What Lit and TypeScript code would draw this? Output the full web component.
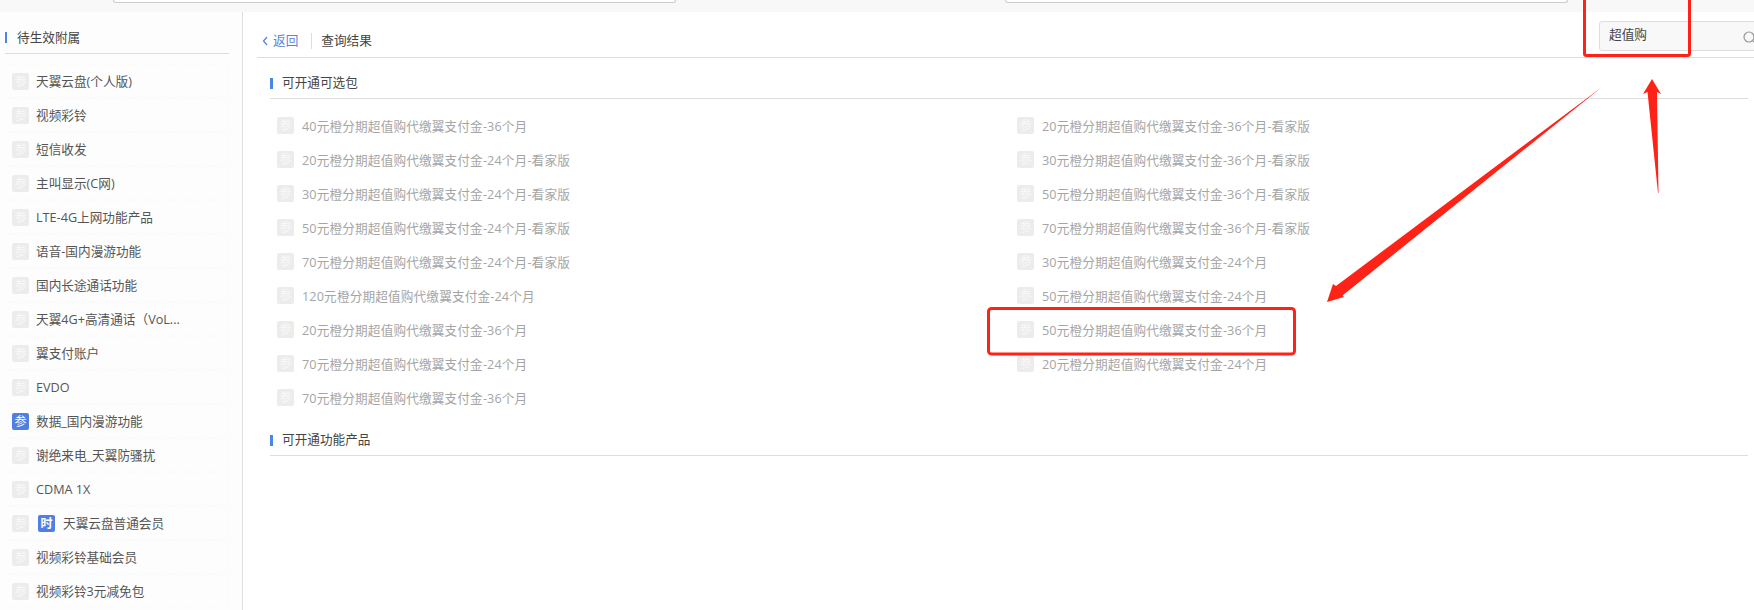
import { LitElement, html, css } from "lit";
import { customElement } from "lit/decorators.js";

const side = [
  ["天翼云盘(个人版)"], ["视频彩铃"], ["短信收发"], ["主叫显示(C网)"], ["LTE-4G上网功能产品"],
  ["语音-国内漫游功能"], ["国内长途通话功能"], ["天翼4G+高清通话（VoL..."], ["翼支付账户"], ["EVDO"],
  ["数据_国内漫游功能", "on"], ["谢绝来电_天翼防骚扰"], ["CDMA 1X"], ["天翼云盘普通会员", "time"],
  ["视频彩铃基础会员"], ["视频彩铃3元减免包"],
];
const P = "元橙分期超值购代缴翼支付金-";
const left = ["40" + P + "36个月", "20" + P + "24个月-看家版", "30" + P + "24个月-看家版", "50" + P + "24个月-看家版", "70" + P + "24个月-看家版", "120" + P + "24个月", "20" + P + "36个月", "70" + P + "24个月", "70" + P + "36个月"];
const right = ["20" + P + "36个月-看家版", "30" + P + "36个月-看家版", "50" + P + "36个月-看家版", "70" + P + "36个月-看家版", "30" + P + "24个月", "50" + P + "24个月", "50" + P + "36个月", "20" + P + "24个月"];

@customElement("app-root")
export class AppRoot extends LitElement {
  static styles = css`
    :host { display: block; width: 1754px; height: 610px; overflow: hidden; position: relative; background: #fff;
      font-family: "Open Sans", "Noto Sans CJK SC", "Liberation Sans", sans-serif; font-size: 12.65px; line-height: 18px; color: #333; }
    .top { height: 12px; background: #f8f8f8; display: flex; }
    .stub { height: 2px; border: 1px solid #ccc; border-top: 0; border-radius: 0 0 3px 3px; background: #fff; }
    .stub.a { margin-left: 113px; width: 561px; }
    .stub.b { margin-left: 329px; width: 561px; }
    .body { display: flex; height: 598px; }
    .side { flex: none; width: 224px; background: #fdfdfd; border-right: 1px solid #ddd; padding: 0 13px 0 5px; }
    .stitle { display: flex; align-items: center; height: 42px; padding-top: 9px; box-sizing: border-box; border-bottom: 1px solid #ddd; margin-bottom: 10px; color: #444; }
    .bar { width: 2px; height: 11px; background: #4a86e8; margin-right: 10px; }
    .sitem { display: flex; align-items: center; height: 34px; padding-left: 6px; box-sizing: border-box; color: #555; border: 1px dashed #fafafa; border-radius: 3px; }
    .ic { width: 17px; height: 17px; flex: none; border-radius: 2px; background: #ececec; color: #f9f9f9; font-size: 12px; line-height: 17px; text-align: center; overflow: hidden; }
    .ic.on { background: #4f7fe3; color: #fff; }
    .sitem .ic { margin-right: 7px; }
    .sitem .ic.time { background: #4f7fe3; color: #fff; font-weight: 700; margin: 0 8px 0 2px; }
    .main { flex: 1; min-width: 0; padding-left: 14px; }
    .head { height: 46px; padding-top: 13px; border-bottom: 1px solid #ddd; display: flex; align-items: center; color: #444; box-sizing: border-box; }
    .back { color: #5b84e0; display: flex; align-items: center; gap: 5px; margin-left: 5px; }
    .raised { padding-bottom: 2px; }
    .sep { width: 1px; height: 16px; background: #ddd; margin: 0 9px 0 13px; }
    .search { margin: 0 -10px 10px auto; width: 165px; height: 30px; background: #f8f8f8; border: 1px solid #ddd; border-radius: 3px; display: flex; align-items: center; padding: 0 0 4px 9px; box-sizing: border-box; position: relative; }
    .search svg { position: absolute; left: 143px; top: 9px; }
    .sec { margin: 0 6px 0 13px; }
    .sect { height: 41px; padding-top: 11px; box-sizing: border-box; display: flex; align-items: center; border-bottom: 1px solid #ddd; color: #444; }
    .sect .bar { width: 3px; margin-right: 9px; }
    .sect .label { padding-bottom: 3px; }
    .grid { display: grid; grid-template-columns: 740px 1fr; grid-auto-rows: 34px; padding: 9.5px 0 0 7px; height: 316px; box-sizing: border-box; }
    .gi { display: flex; align-items: center; gap: 8px; color: #a5a5a5; letter-spacing: 0.14px; }
    .over { position: absolute; left: 0; top: 0; pointer-events: none; }
  `;

  render() {
    const badge = (c = "") => html`<span class="ic ${c}">参</span>`;
    return html`
      <div class="top"><div class="stub a"></div><div class="stub b"></div></div>
      <div class="body">
        <aside class="side">
          <div class="stitle"><span class="bar"></span>待生效附属</div>
          ${side.map(([t, k]) => html`<div class="sitem">
            ${badge(k === "on" ? "on" : "")}
            ${k === "time" ? html`<span class="ic time">时</span>` : ""}<span>${t}</span></div>`)}
        </aside>
        <main class="main">
          <div class="head">
            <span class="back"><svg width="6" height="10" viewBox="0 0 6 10"><path d="M5 1 1.500 5 5 9" fill="none" stroke="currentColor" stroke-width="1.300"/></svg><span class="raised">返回</span></span>
            <span class="sep"></span><span class="raised">查询结果</span>
            <div class="search">超值购<svg width="14" height="14" viewBox="0 0 14 14"><circle cx="6" cy="6" r="5" fill="none" stroke="#999" stroke-width="1.200"/><path d="M10 10l3 3" stroke="#999" stroke-width="1.200"/></svg></div>
          </div>
          <div class="sec">
            <div class="sect"><span class="bar"></span><span class="label">可开通可选包</span></div>
            <div class="grid">
              ${left.map((t, i) => html`
                <div class="gi">${badge()}${t}</div>
                ${right[i] ? html`<div class="gi">${badge()}${right[i]}</div>` : html`<div></div>`}`)}
            </div>
            <div class="sect"><span class="bar"></span><span class="label">可开通功能产品</span></div>
          </div>
        </main>
      </div>
      <svg class="over" width="1754" height="610" viewBox="0 0 1754 610">
        <rect x="1584.500" y="-5" width="105" height="60.500" rx="2" fill="none" stroke="#ff2216" stroke-width="3"/>
        <rect x="988.500" y="308.500" width="306" height="45.500" rx="3" fill="none" stroke="#ff2216" stroke-width="3"/>
        <path d="M1652 79 1661 94 1657 92 1658.500 193 1658 193 1647.500 92 1643 94Z" fill="#ff2216"/>
        <path d="M1602 87 1336 286 1333 284 1327 302 1344 297 1342.500 295.500Z" fill="#ff2216"/>
      </svg>
    `;
  }
}
